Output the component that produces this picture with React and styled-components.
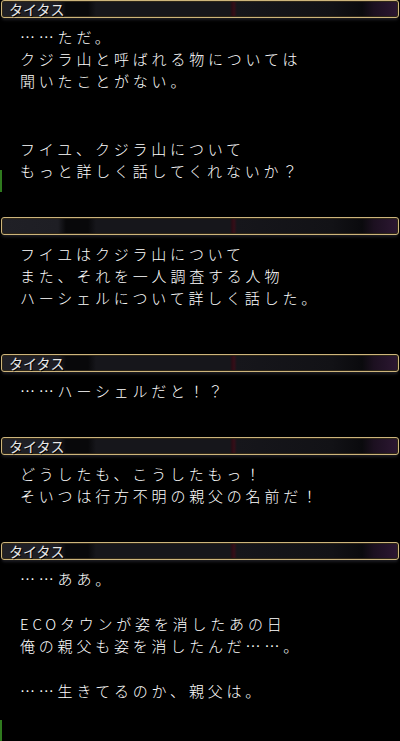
import React from "react";
import styled, { createGlobalStyle } from "styled-components";

const Global = createGlobalStyle`
  html, body { margin: 0; padding: 0; background: #000; }
  body { width: 400px; height: 741px; overflow: hidden; }
  #root { background: #000; min-height: 741px; }
`;

const Page = styled.div`
  position: relative;
  width: 400px;
  height: 741px;
  background: #000;
  display: flex;
  flex-direction: column;
  font-family: "Noto Sans CJK JP", "Noto Sans", sans-serif;
  color: #f4f4f4;
  overflow: hidden;
`;

const Header = styled.div`
  position: relative;
  box-sizing: border-box;
  height: 18px;
  margin: 0 1px;
  border: 1px solid #cdb57c;
  border-radius: 3px;
  box-shadow: inset 0 0 0 1px #2e2618, 0 3px 3px -1px rgba(36, 36, 42, 0.8);
  background: linear-gradient(
    90deg,
    #202026 0px,
    #1e1e24 56px,
    #08080a 64px,
    #08080a 86px,
    #16161b 94px,
    #16161b 228px,
    #2a0c14 230px,
    #360e18 232px,
    #16161b 235px,
    #121216 330px,
    #0a0a0d 360px,
    #1c1020 372px,
    #2e1834 398px
  );
  display: flex;
  align-items: center;
  padding-left: 7px;
`;

const Name = styled.span`
  font-size: 14px;
  line-height: 16px;
  color: #e8e8e8;
  letter-spacing: 0px;
  white-space: nowrap;
  text-shadow: 1px 1px 0 #000;
`;

const Body = styled.div`
  padding: ${(p) => p.$top ?? 8}px 0 ${(p) => p.$bottom ?? 35}px 20px;
  display: flex;
  flex-direction: column;
`;

const Line = styled.div`
  font-size: 15px;
  font-weight: 300;
  line-height: 22px;
  height: 22px;
  letter-spacing: 3.8px;
  white-space: nowrap;
  color: #ffffff;
`;

const Blank = styled.div`
  height: 23px;
`;

const EdgeMark = styled.div`
  position: absolute;
  left: 0;
  width: 2px;
  background: #2f7a1e;
`;

const messages = [
  {
    name: "タイタス",
    bottom: 35,
    lines: [
      "……ただ。",
      "クジラ山と呼ばれる物については",
      "聞いたことがない。",
      "",
      "",
      "フイユ、クジラ山について",
      "もっと詳しく話してくれないか？",
    ],
  },
  {
    name: "",
    bottom: 45,
    lines: [
      "フイユはクジラ山について",
      "また、それを一人調査する人物",
      "ハーシェルについて詳しく話した。",
    ],
  },
  {
    name: "タイタス",
    bottom: 35,
    lines: ["……ハーシェルだと！？"],
  },
  {
    name: "タイタス",
    bottom: 35,
    lines: ["どうしたも、こうしたもっ！", "そいつは行方不明の親父の名前だ！"],
  },
  {
    name: "タイタス",
    bottom: 35,
    lines: [
      "……ああ。",
      "",
      "ECOタウンが姿を消したあの日",
      "俺の親父も姿を消したんだ……。",
      "",
      "……生きてるのか、親父は。",
    ],
  },
];

export default function App() {
  return (
    <>
      <Global />
      <Page>
        {messages.map((m, i) => (
          <React.Fragment key={i}>
            <Header>
              <Name>{m.name}</Name>
            </Header>
            <Body $bottom={m.bottom}>
              {m.lines.map((l, j) =>
                l === "" ? <Blank key={j} /> : <Line key={j}>{l}</Line>
              )}
            </Body>
          </React.Fragment>
        ))}
        <EdgeMark style={{ top: 170, height: 22 }} />
        <EdgeMark style={{ top: 720, height: 21 }} />
      </Page>
    </>
  );
}
